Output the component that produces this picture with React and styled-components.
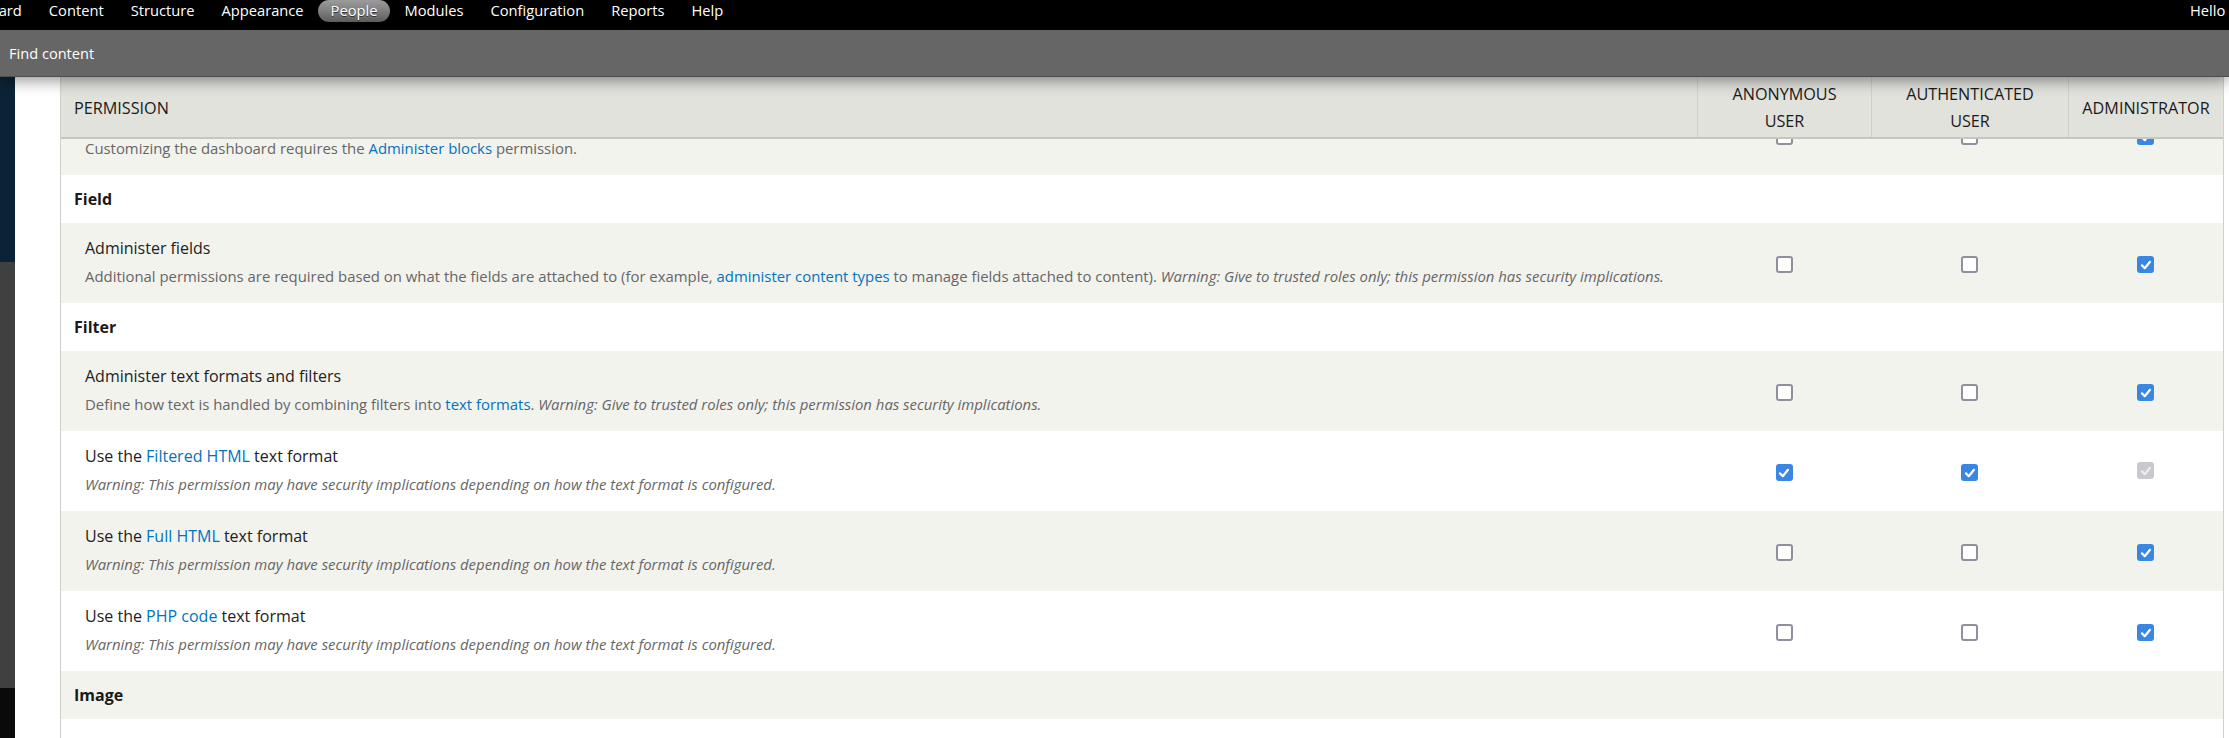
import styled, { createGlobalStyle } from "styled-components";

const GlobalStyle = createGlobalStyle`
  html, body {
    margin: 0;
    padding: 0;
    background: #fff;
  }
  body {
    font-family: "Open Sans", "Noto Sans", sans-serif;
    color: #333;
  }
`

const Page = styled.div`
  display: flex;
  flex-direction: column;
  height: 100vh;
  overflow: hidden;
`

const Toolbar = styled.div`
  display: flex;
  height: 30px;
  background: #000;
  overflow: hidden;
  flex-shrink: 0;
`

const Nav = styled.ul`
  display: flex;
  gap: 1px;
  margin: 0 0 0 -67px;
  padding: 0;
  list-style: none;
  flex: 1;
`

const NavLink = styled.li`
  height: 22px;
  line-height: 21px;
  padding: 0 13px;
  border-radius: 11px;
  font-size: 14.7px;
  color: #fff;
  white-space: nowrap;
  background: ${props => props.$active ? "linear-gradient(#9c9c9c, #5f5f5f)" : "transparent"};
  text-shadow: ${props => props.$active ? "0 1px 0 #333" : "none"};
`

const UserMenu = styled.div`
  width: 39px;
  overflow: hidden;
  white-space: nowrap;
  flex-shrink: 0;
  line-height: 21px;
  font-size: 14.7px;
  color: #fff;
`

const Shortcuts = styled.div`
  position: relative;
  z-index: 2;
  height: 47px;
  display: flex;
  align-items: center;
  padding-left: 9px;
  background: #666;
  border-bottom: 1px solid #4e4e4e;
  box-sizing: border-box;
  box-shadow: 0 3px 16px rgba(0, 0, 0, 0.45);
  font-size: 14.6px;
  color: #fff;
  flex-shrink: 0;
`

const Body = styled.div`
  display: flex;
  flex: 1;
  min-height: 0;
`

const Strip = styled.div`
  width: 15px;
  display: flex;
  flex-direction: column;
  flex-shrink: 0;
`

const StripPart = styled.div`
  height: ${props => props.$h ? props.$h + "px" : "auto"};
  flex: ${props => props.$h ? "none" : 1};
  background: ${props => props.$color};
`

const Main = styled.div`
  flex: 1;
  min-width: 0;
  padding: 0 5px 0 45px;
  display: flex;
`

const Table = styled.div`
  flex: 1;
  display: flex;
  flex-direction: column;
  border-left: 1px solid #cfd0ca;
  border-right: 1px solid #cfd0ca;
`

const cols = "1fr 174px 197px 155px";

const HeaderRow = styled.div`
  display: grid;
  grid-template-columns: ${cols};
  height: 62px;
  box-sizing: border-box;
  background: #e1e2dc;
  border-bottom: 2px solid #c6c7c1;
  flex-shrink: 0;
`

const HeaderCell = styled.div`
  display: flex;
  align-items: center;
  justify-content: ${props => props.$left ? "flex-start" : "center"};
  padding: 2px ${props => props.$left ? "0 0 13px" : "0 0 0"};
  border-left: ${props => props.$left ? "none" : "1px solid #cfd0ca"};
  text-align: center;
  text-transform: uppercase;
  font-size: 16.2px;
  line-height: 27px;
  color: #1a1a1a;
`

const Viewport = styled.div`
  flex: 1;
  overflow: hidden;
`

const Rows = styled.div`
  margin-top: -44px;
`

const Row = styled.div`
  display: grid;
  grid-template-columns: ${cols};
  background: ${props => props.$odd ? "#f3f3ee" : "#fff"};
`

const SectionTitle = styled.div`
  grid-column: 1 / -1;
  padding: 12px 0 12px 13px;
  line-height: 24px;
  font-size: 16px;
  font-weight: 700;
  color: #1a1a1a;
`

const PermCell = styled.div`
  padding: 13px 0 16px 24px;
`

const PermTitle = styled.div`
  font-size: 16px;
  line-height: 24px;
  color: #222;
`

const PermDesc = styled.div`
  margin-top: 6px;
  font-size: 14.9px;
  line-height: 21px;
  color: #666;
  white-space: nowrap;

  em {
    font-style: italic;
  }
`

const Link = styled.a`
  color: #0074bd;
  text-decoration: none;
`

const BoxCell = styled.div`
  display: flex;
  align-items: center;
  justify-content: center;
`

const Box = styled.span`
  display: flex;
  align-items: center;
  justify-content: center;
  width: 17px;
  height: 17px;
  box-sizing: border-box;
  border-radius: 3px;
  margin-top: ${props => props.$disabled ? "-1px" : "3px"};
  border: ${props => props.$checked ? "none" : "2px solid #8f8f9d"};
  background: ${props => props.$disabled ? "#c9c9cd" : props.$checked ? "#3a86e2" : "#fff"};
`

function Checkbox({ checked, disabled }) {
  return (
    <Box $checked={checked} $disabled={disabled}>
      {checked && (
        <svg width="12" height="12" viewBox="0 0 12 12">
          <path
            d="M2 6.4 L4.8 9.2 L10 2.8"
            fill="none"
            stroke={disabled ? "#ececee" : "#fff"}
            strokeWidth="2.2"
            strokeLinecap="round"
            strokeLinejoin="round"
          />
        </svg>
      )}
    </Box>
  );
}

const warnTrusted = <em>Warning: Give to trusted roles only; this permission has security implications.</em>;
const warnFormat = <em>Warning: This permission may have security implications depending on how the text format is configured.</em>;

const rows = [
  {
    title: "Access the Dashboard",
    desc: <>Customizing the dashboard requires the <Link href="#">Administer blocks</Link> permission.</>,
    roles: [false, false, true],
  },
  { section: "Field" },
  {
    title: "Administer fields",
    desc: <>Additional permissions are required based on what the fields are attached to (for example, <Link href="#">administer content types</Link> to manage fields attached to content). {warnTrusted}</>,
    roles: [false, false, true],
  },
  { section: "Filter" },
  {
    title: "Administer text formats and filters",
    desc: <>Define how text is handled by combining filters into <Link href="#">text formats</Link>. {warnTrusted}</>,
    roles: [false, false, true],
  },
  {
    title: <>Use the <Link href="#">Filtered HTML</Link> text format</>,
    desc: warnFormat,
    roles: [true, true, true],
    locked: true,
  },
  {
    title: <>Use the <Link href="#">Full HTML</Link> text format</>,
    desc: warnFormat,
    roles: [false, false, true],
  },
  {
    title: <>Use the <Link href="#">PHP code</Link> text format</>,
    desc: warnFormat,
    roles: [false, false, true],
  },
  { section: "Image" },
  {
    title: "Administer image styles",
    desc: <>Create and modify styles for generating image modifications such as thumbnails.</>,
    roles: [false, false, true],
  },
  { section: "Menu" },
];

const navItems = ["Dashboard", "Content", "Structure", "Appearance", "People", "Modules", "Configuration", "Reports", "Help"];

export default function App() {
  return (
    <Page>
      <GlobalStyle />
      <Toolbar>
        <Nav>
          {navItems.map(item => (
            <NavLink key={item} $active={item === "People"}>{item}</NavLink>
          ))}
        </Nav>
        <UserMenu>Hello admin</UserMenu>
      </Toolbar>
      <Shortcuts>Find content</Shortcuts>
      <Body>
        <Strip>
          <StripPart $h={185} $color="#0b2336" />
          <StripPart $h={426} $color="#404040" />
          <StripPart $color="#0a0a0a" />
        </Strip>
        <Main>
          <Table>
            <HeaderRow>
              <HeaderCell $left>Permission</HeaderCell>
              <HeaderCell>Anonymous<br />user</HeaderCell>
              <HeaderCell>Authenticated<br />user</HeaderCell>
              <HeaderCell>Administrator</HeaderCell>
            </HeaderRow>
            <Viewport>
              <Rows>
                {rows.map((row, i) => (
                  <Row key={i} $odd={i % 2 === 0}>
                    {row.section ? (
                      <SectionTitle>{row.section}</SectionTitle>
                    ) : (
                      <>
                        <PermCell>
                          <PermTitle>{row.title}</PermTitle>
                          <PermDesc>{row.desc}</PermDesc>
                        </PermCell>
                        {row.roles.map((on, j) => (
                          <BoxCell key={j}>
                            <Checkbox checked={on} disabled={row.locked && j === 2} />
                          </BoxCell>
                        ))}
                      </>
                    )}
                  </Row>
                ))}
              </Rows>
            </Viewport>
          </Table>
        </Main>
      </Body>
    </Page>
  );
}
